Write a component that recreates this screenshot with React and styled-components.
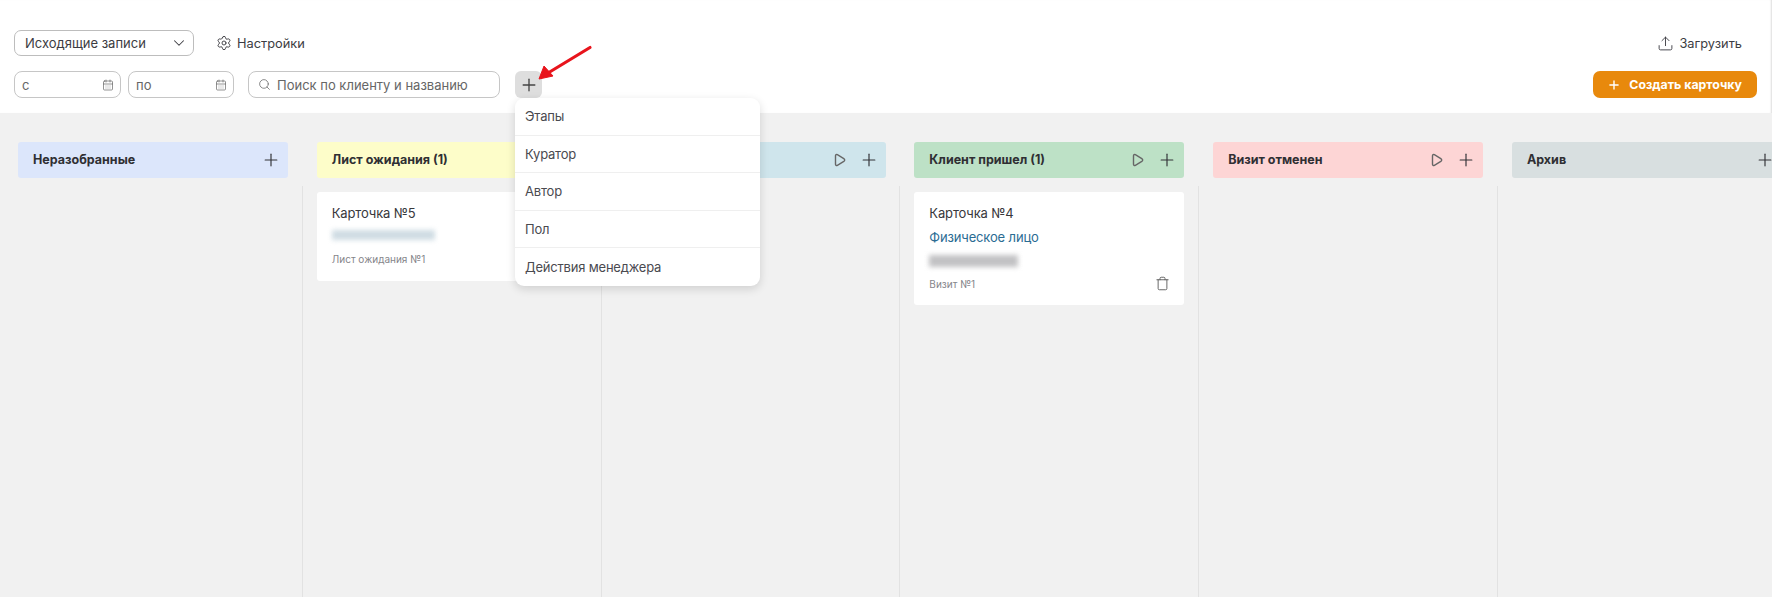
import * as React from 'react'
import styled, { createGlobalStyle } from 'styled-components';
import { CalendarDays, ChevronDown, Plus, Search, Settings, Trash, Upload } from 'lucide-react';

const Global = createGlobalStyle`
  html, body {
    margin: 0;
    height: 100%;
    overflow: hidden;
    background: #f1f1f1;
    font-family: Inter, "Noto Sans", sans-serif;
  }
`;

const Page = styled.div`
  position: relative;
  width: 1772px;
  height: 597px;
  overflow: hidden;
`;

const Header = styled.header`
  box-sizing: border-box;
  height: 113px;
  padding: 30px 15px 0 14px;
  background: #fff;
  box-shadow: inset -2px 0 2px -1px #ddd;
`;

const Row = styled.div`
  display: flex;
  align-items: center;
  height: ${p => p.$h}px;
  margin-bottom: 15px;
`;

const Select = styled.div`
  box-sizing: border-box;
  flex: 0 0 180px;
  display: flex;
  align-items: center;
  justify-content: space-between;
  height: 26px;
  padding: 0 5px 0 10px;
  border: 1px solid #bdbdbd;
  border-radius: 7px;
  font-size: 13px;
  white-space: nowrap;
  color: #3c3c42;
`;

const TextButton = styled.div`
  display: flex;
  align-items: center;
  gap: ${p => p.$gap}px;
  font-size: 12.8px;
  color: #3c3c42;
`;

const SettingsButton = styled(TextButton)`
  margin-left: 22px;
`;

const UploadButton = styled(TextButton)`
  margin-left: auto;
  margin-right: 15px;
`;

const Field = styled.div`
  box-sizing: border-box;
  display: flex;
  align-items: center;
  gap: 6px;
  width: ${p => p.$w}px;
  height: 27px;
  margin-right: ${p => p.$right}px;
  padding: 0 6px 0 ${p => p.$left}px;
  border: 1px solid #c6c6c6;
  border-radius: 8px;
  font-size: 13px;
  color: #666;
`;

const FieldText = styled.span`
  flex: 1;
  white-space: nowrap;
`;

const AddFilter = styled.div`
  display: flex;
  align-items: center;
  justify-content: center;
  width: 27px;
  height: 27px;
  border-radius: 6px;
  background: #dedede;
  color: #444;
`;

const CreateButton = styled.div`
  box-sizing: border-box;
  display: flex;
  align-items: center;
  gap: 8px;
  height: 27px;
  margin-left: auto;
  padding: 0 15px 0 14px;
  border-radius: 7px;
  background: #e8890c;
  color: #fff;
  font-size: 12.3px;
  font-weight: 700;
`;

const Board = styled.main`
  display: flex;
  height: 484px;
  padding: 29px 0 0 18px;
  box-sizing: border-box;
`;

const Lane = styled.section`
  flex: 0 0 270px;
`;

const Divider = styled.div`
  flex: 0 0 1px;
  margin: 44px 13.9px 0;
  background: #e2e2e2;
`;

const LaneHead = styled.div`
  display: flex;
  align-items: center;
  height: 36px;
  padding: 0 7px 0 15px;
  border-radius: 3px;
  background: ${p => p.$color};
  color: #2f2f33;
`;

const LaneTitle = styled.div`
  flex: 1;
  padding-bottom: 1px;
  font-size: 12.5px;
  font-weight: 700;
`;

const LaneIcons = styled.div`
  display: flex;
  align-items: center;
  gap: 12px;
  color: #333337;
`;

const LaneBody = styled.div`
  padding-top: 14px;
`;

const Card = styled.article`
  position: relative;
  box-sizing: border-box;
  height: ${p => p.$h}px;
  padding: 13px 15px 0;
  border-radius: 3px;
  background: #fff;
`;

const CardTitle = styled.div`
  font-size: 13px;
  line-height: 16px;
  letter-spacing: -0.15px;
  color: #38383c;
`;

const CardLink = styled.div`
  margin-top: 8px;
  font-size: 13px;
  line-height: 16px;
  letter-spacing: -0.15px;
  color: #2b6c93;
`;

const Blurred = styled.div`
  width: ${p => p.$w}px;
  height: ${p => p.$hh}px;
  margin-top: ${p => p.$top}px;
  background: ${p => p.$color};
  filter: blur(2.5px);
`;

const CardMeta = styled.div`
  margin-top: ${p => p.$top}px;
  font-size: 10px;
  line-height: 13px;
  color: #85858a;
`;

const TrashIcon = styled(Trash)`
  position: absolute;
  right: 14px;
  bottom: 14px;
  color: #555;
`;

const Menu = styled.ul`
  position: absolute;
  left: 515px;
  top: 98px;
  width: 245px;
  margin: 0;
  padding: 0;
  list-style: none;
  border-radius: 9px;
  background: #fff;
  box-shadow: 0 3px 10px rgba(0, 0, 0, 0.14);
`;

const MenuItem = styled.li`
  box-sizing: border-box;
  display: flex;
  align-items: center;
  height: 37.5px;
  padding-left: 10px;
  font-size: 13px;
  letter-spacing: -0.2px;
  color: #4a4a50;
  border-bottom: 1px solid #efefef;
  &:last-child {
    border-bottom: 0;
  }
`;

const Arrow = styled.svg`
  position: absolute;
  left: 530px;
  top: 40px;
`;

const RunIcon = () => (
    <svg width="14" height="14" viewBox="0 0 14 14" fill="none" stroke="#666" strokeWidth="1.4">
        <path d="M2.5 2.8 C2.5 1.6 3.4 1.2 4.4 1.6 L10.8 5.6 C12 6.4 12 7.6 10.8 8.4 L4.4 12.4 C3.4 12.8 2.5 12.4 2.5 11.2 Z" />
    </svg>
);

const lanes = [
  { title: 'Неразобранные', color: '#dce6fb' },
  {
    title: 'Лист ожидания (1)',
    color: '#fdfdc9',
    card: { h: 89, title: 'Карточка №5', blur: { w: 103, hh: 10, top: 9, color: '#cfdce3' }, meta: 'Лист ожидания №1', metaTop: 13 },
  },
  { title: '', color: '#cfe5ec', run: true },
  {
    title: 'Клиент пришел (1)',
    color: '#bde1c6',
    run: true,
    card: { h: 113, title: 'Карточка №4', link: 'Физическое лицо', blur: { w: 89, hh: 12, top: 10, color: '#c2c2c4' }, meta: 'Визит №1', metaTop: 11, trash: true },
  },
  { title: 'Визит отменен', color: '#fdd5d5', run: true },
  { title: 'Архив', color: '#d8dfe0' },
];

const menuItems = ['Этапы', 'Куратор', 'Автор', 'Пол', 'Действия менеджера'];

export default function App () {
    return(
        <Page>
            <Global />
            <Header>
                <Row $h={26}>
                    <Select>
                        Исходящие записи
                        <ChevronDown size={18} strokeWidth={1.4} />
                    </Select>
                    <SettingsButton $gap={5}>
                        <Settings size={16} strokeWidth={1.4} />
                        Настройки
                    </SettingsButton>
                    <UploadButton $gap={5}>
                        <Upload size={17} strokeWidth={1.3} />
                        Загрузить
                    </UploadButton>
                </Row>
                <Row $h={27}>
                    <Field $w={107} $right={7} $left={7}>
                        <FieldText>с</FieldText>
                        <CalendarDays size={12} strokeWidth={1.4} />
                    </Field>
                    <Field $w={106} $right={14} $left={7}>
                        <FieldText>по</FieldText>
                        <CalendarDays size={12} strokeWidth={1.4} />
                    </Field>
                    <Field $w={252} $right={15} $left={9}>
                        <Search size={13} strokeWidth={1.4} />
                        <FieldText>Поиск по клиенту и названию</FieldText>
                    </Field>
                    <AddFilter>
                        <Plus size={20} strokeWidth={1.6} />
                    </AddFilter>
                    <CreateButton>
                        <Plus size={14} strokeWidth={2.4} />
                        Создать карточку
                    </CreateButton>
                </Row>
            </Header>
            <Board>
                {lanes.map((lane, i) => (
                    <React.Fragment key={i}>
                        {i > 0 && <Divider />}
                        <Lane>
                            <LaneHead $color={lane.color}>
                                <LaneTitle>{lane.title}</LaneTitle>
                                <LaneIcons>
                                    {lane.run && <RunIcon />}
                                    <Plus size={20} strokeWidth={1.4} />
                                </LaneIcons>
                            </LaneHead>
                            <LaneBody>
                                {lane.card && (
                                    <Card $h={lane.card.h}>
                                        <CardTitle>{lane.card.title}</CardTitle>
                                        {lane.card.link && <CardLink>{lane.card.link}</CardLink>}
                                        <Blurred {...{ $w: lane.card.blur.w, $hh: lane.card.blur.hh, $top: lane.card.blur.top, $color: lane.card.blur.color }} />
                                        <CardMeta $top={lane.card.metaTop}>{lane.card.meta}</CardMeta>
                                        {lane.card.trash && <TrashIcon size={15} strokeWidth={1.4} />}
                                    </Card>
                                )}
                            </LaneBody>
                        </Lane>
                    </React.Fragment>
                ))}
            </Board>
            <Menu>
                {menuItems.map(item => <MenuItem key={item}>{item}</MenuItem>)}
            </Menu>
            <Arrow width="70" height="50" viewBox="0 0 70 50">
                <path d="M60 7.5 L18 33" stroke="#e8141c" strokeWidth="3.2" strokeLinecap="round" />
                <path d="M9 39 L14 26 L23 36 Z" fill="#e8141c" stroke="#e8141c" strokeWidth="1" />
            </Arrow>
        </Page>
    );
}
